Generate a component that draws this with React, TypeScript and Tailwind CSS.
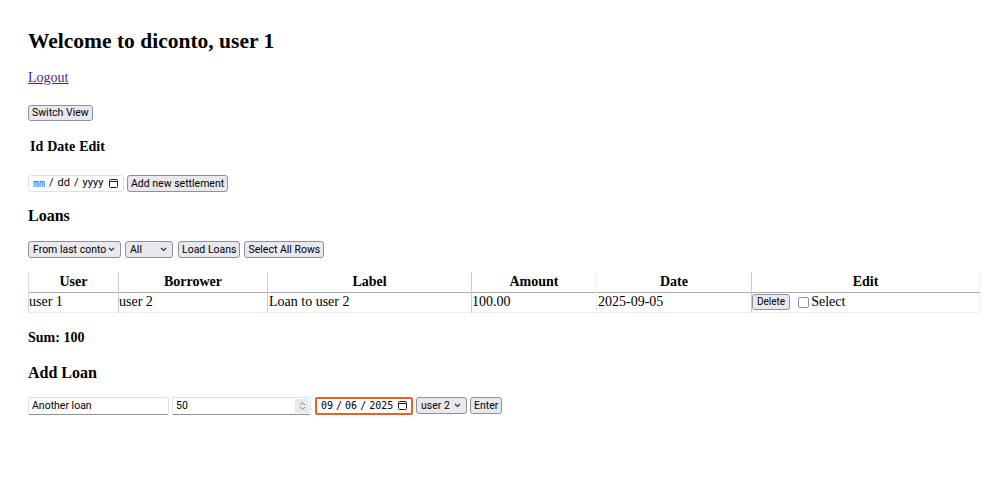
const serif = "font-['Liberation_Serif',serif]";
const ui = "font-['Roboto',sans-serif]";
const mono = "font-['DejaVu_Sans_Mono',monospace]";

function Btn({ children, className = "" }: { children: React.ReactNode; className?: string }) {
  return (
    <button
      className={`flex h-[16px] items-center whitespace-nowrap rounded-[3px] border border-[#8f8f9d] bg-[#e9e9ed] px-[3px] text-[10.5px] leading-[14px] text-black ${ui} ${className}`}
    >
      {children}
    </button>
  );
}

function Select({ value, width }: { value: string; width: string }) {
  return (
    <div
      className={`flex h-[17px] items-center justify-between whitespace-nowrap rounded-[3px] border border-[#8f8f9d] bg-[#e9e9ed] pl-[4px] pr-[5px] text-[10.5px] text-black ${ui} ${width}`}
    >
      <span>{value}</span>
      <svg width="7" height="5" viewBox="0 0 7 5" fill="none" stroke="#333" strokeWidth="1.2">
        <path d="M1 1l2.5 2.5L6 1" />
      </svg>
    </div>
  );
}

function CalendarIcon() {
  return (
    <svg width="11" height="11" viewBox="0 0 11 11" fill="none" stroke="#222" strokeWidth="1">
      <rect x="1.5" y="1.5" width="8" height="8" rx="1" />
      <path d="M1.5 3.5h8" />
    </svg>
  );
}

function DateParts({ parts, first = "", gap = "gap-[3px]" }: { parts: string[]; first?: string; gap?: string }) {
  return (
    <span className={`flex items-center ${gap}`}>
      <span className={first}>{parts[0]}</span>
      <span>/</span>
      <span>{parts[1]}</span>
      <span>/</span>
      <span>{parts[2]}</span>
    </span>
  );
}

const rows = [{ user: "user 1", borrower: "user 2", label: "Loan to user 2", amount: "100.00", date: "2025-09-05" }];

export default function App() {
  return (
    <div className={`min-h-[489px] bg-white pl-[28px] text-black ${serif}`}>
      <h2 className="pt-[28px] text-[21.5px] font-bold leading-[26px]">Welcome to diconto, user 1</h2>

      <a href="#" className="mt-[16px] block w-fit text-[14px] leading-[16px] text-[#551a8b] underline">
        Logout
      </a>

      <div className="mt-[19px] flex">
        <Btn>Switch View</Btn>
      </div>

      <div className="mt-[18px] flex gap-[4px] pl-[2px] text-[14px] font-bold leading-[16px]">
        <span>Id</span>
        <span>Date</span>
        <span>Edit</span>
      </div>

      <div className="mt-[20px] flex items-center gap-[3px]">
        <div className={`flex h-[17px] w-[96px] items-center justify-between whitespace-nowrap rounded-[3px] border border-[#e0e0e0] pl-[4px] pr-[4px] text-[11px] ${ui}`}>
          <DateParts parts={["mm", "dd", "yyyy"]} first={`text-[#1a5fd0] ${mono} text-[10px]`} gap="gap-[4px]" />
          <CalendarIcon />
        </div>
        <Btn className="h-[17px]">Add new settlement</Btn>
      </div>

      <h3 className="mt-[14px] text-[16px] font-bold leading-[20px]">Loans</h3>

      <div className="mt-[15px] flex items-center gap-[4px]">
        <Select value="From last conto" width="w-[93px]" />
        <Select value="All" width="w-[48px]" />
        <Btn className="ml-[1px] h-[17px]">Load Loans</Btn>
        <Btn className="h-[17px]">Select All Rows</Btn>
      </div>

      <table className="mt-[14px] w-[952px] border-collapse border-r border-[#eeeeee] text-[14px] leading-[18px]">
        <thead>
          <tr className="h-[20px] border-b border-[#aaaaaa] font-bold">
            <th className="w-[90px] border-l border-[#dddddd]">User</th>
            <th className="w-[149px] border-l border-[#cccccc]">Borrower</th>
            <th className="w-[204px] border-l border-[#cccccc]">Label</th>
            <th className="w-[125px] border-l border-[#cccccc]">Amount</th>
            <th className="w-[155px] border-l border-[#f0f0f0]">Date</th>
            <th className="border-l border-[#cccccc]">Edit</th>
          </tr>
        </thead>
        <tbody>
          {rows.map((r) => (
            <tr key={r.label} className="h-[20px] border-b border-[#eeeeee] text-left">
              <td className="border-l border-[#dddddd] px-0">{r.user}</td>
              <td className="border-l border-[#cccccc]">{r.borrower}</td>
              <td className="border-l border-[#cccccc] pl-[1px]">{r.label}</td>
              <td className="border-l border-[#cccccc]">{r.amount}</td>
              <td className="border-l border-[#f0f0f0] pl-[1px]">{r.date}</td>
              <td className="border-l border-[#cccccc]">
                <div className="flex items-center">
                  <Btn className="px-[4px] text-[10px]">Delete</Btn>
                  <span className="ml-[8px] mr-[2px] inline-block h-[11px] w-[11px] rounded-[2px] border border-[#8f8f9d]" />
                  <span>Select</span>
                </div>
              </td>
            </tr>
          ))}
        </tbody>
      </table>

      <div className="mt-[17px] text-[14px] font-bold leading-[16px]">Sum: 100</div>

      <h3 className="mt-[17px] text-[16px] font-bold leading-[20px]">Add Loan</h3>

      <div className={`mt-[14px] flex items-center gap-[3px] text-[10.5px] ${ui}`}>
        <div className="flex h-[18px] w-[141px] items-center whitespace-nowrap rounded-[2px] border border-[#8f8f9d] border-t-[#e0e0e0] border-l-[#e0e0e0] border-r-[#e0e0e0] px-[3px]">
          Another loan
        </div>
        <div className="flex h-[18px] w-[139px] items-center justify-between rounded-[2px] border border-[#8f8f9d] border-t-[#e0e0e0] border-l-[#e0e0e0] border-r-[#e0e0e0] pl-[3px] pr-[1px]">
          <span>50</span>
          <span className="flex h-[14px] w-[14px] items-center justify-center bg-[#e9e9ed]">
            <svg width="7" height="10" viewBox="0 0 7 10" fill="none" stroke="#888" strokeWidth="1">
              <path d="M1 4l2.5-2.5L6 4M1 6l2.5 2.5L6 6" />
            </svg>
          </span>
        </div>
        <div className={`ml-[1px] flex h-[18px] w-[98px] items-center justify-between whitespace-nowrap rounded-[2px] border-2 border-[#e2622c] pl-[4px] pr-[3px] text-[10px] ${mono}`}>
          <DateParts parts={["09", "06", "2025"]} />
          <CalendarIcon />
        </div>
        <Select value="user 2" width="w-[51px]" />
        <Btn className="h-[17px]">Enter</Btn>
      </div>
    </div>
  );
}
